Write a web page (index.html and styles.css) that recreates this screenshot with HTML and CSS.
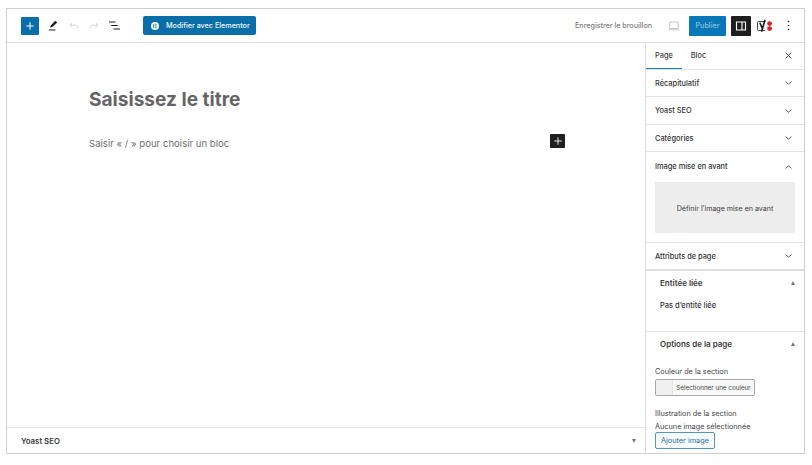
FILE: index.html
```html
<!DOCTYPE html>
<html lang="fr">
<head>
	<meta charset="UTF-8">
	<title>Modifier la page</title>
	<link rel="stylesheet" href="styles.css">
</head>
<body>
	<div class="frame">
		<div class="topbar">
			<div class="tools">
				<span class="add"><svg width="8" height="8" viewBox="0 0 8 8"><path d="M4 .3v7.4M.3 4h7.4" stroke="#fff" stroke-width="1" fill="none"/></svg></span>
				<svg class="ic-pen" width="10" height="11" viewBox="0 0 10 11"><path d="M7.2 .8 9.2 2.6 4.4 7 2.2 7.6 2.8 5.4Z" fill="#1e1e1e"/><path d="M.8 10h6.6" stroke="#1e1e1e" stroke-width="1"/></svg>
				<svg class="ic-undo" width="10" height="8" viewBox="0 0 10 8"><path d="M3.4 .8 1 3.2 3.4 5.6M1 3.2h5.4c1.4 0 2.4 1 2.4 2.4v1" stroke="#cdcdcd" stroke-width=".9" fill="none"/></svg>
				<svg class="ic-redo" width="10" height="8" viewBox="0 0 10 8"><path d="M6.6 .8 9 3.2 6.6 5.6M9 3.2H3.6C2.2 3.2 1.2 4.2 1.2 5.6v1" stroke="#cdcdcd" stroke-width=".9" fill="none"/></svg>
				<svg class="ic-list" width="11" height="9" viewBox="0 0 11 9"><path d="M0 1h6.5M2.2 4.5h6.5M4.5 8H11" stroke="#1e1e1e" stroke-width="1.1" fill="none"/></svg>
				<span class="elementor">
					<svg width="8" height="8" viewBox="0 0 8 8"><circle cx="4" cy="4" r="4" fill="#f4f7fa"/><path d="M2.6 2.2v3.6" stroke="#0a6ea8" stroke-width=".9"/><path d="M3.8 2.4h1.9M3.8 4h1.9M3.8 5.6h1.9" stroke="#0a6ea8" stroke-width=".7"/></svg>
					Modifier avec Elementor
				</span>
			</div>
			<div class="actions">
				<span class="draft">Enregistrer le brouillon</span>
				<svg class="ic-laptop" width="12" height="10" viewBox="0 0 12 10"><path d="M1.8 1h8.4v6.5H1.8ZM0.5 8.8h11" stroke="#bdbdbd" stroke-width="0.9" fill="none"/></svg>
				<span class="publish">Publier</span>
				<span class="toggle"><svg width="12" height="12" viewBox="0 0 12 12"><path d="M1.5 2h9v8h-9ZM7 2v8" stroke="#fff" stroke-width="1.1" fill="none"/></svg></span>
				<svg class="ic-yoast" width="16" height="14" viewBox="0 0 16 14"><path d="M8.5 2.5H1.5a1 1 0 0 0-1 1v7a1 1 0 0 0 1 1h6.5" fill="#f4f4f4" stroke="#444" stroke-width="1"/><path d="M2.8 3.8 5.3 9.4M8 .8 4.6 12.8" stroke="#111" stroke-width="1.5" fill="none"/><circle cx="12.6" cy="4.6" r="2.4" fill="#d8232f"/><circle cx="12.6" cy="9.6" r="2.4" fill="#d8232f"/></svg>
				<svg class="ic-more" width="3" height="11" viewBox="0 0 3 11"><circle cx="1.5" cy="1.5" r="0.8" fill="#1e1e1e"/><circle cx="1.5" cy="5.5" r="0.8" fill="#1e1e1e"/><circle cx="1.5" cy="9.5" r="0.8" fill="#1e1e1e"/></svg>
			</div>
		</div>

		<div class="workspace">
			<div class="editor">
				<div class="canvas">
					<h1 class="title">Saisissez le titre</h1>
					<div class="block-row">
						<p class="placeholder">Saisir « / » pour choisir un bloc</p>
						<span class="block-add"><svg width="8" height="8" viewBox="0 0 8 8"><path d="M4 .3v7.4M.3 4h7.4" stroke="#e8e8e8" stroke-width="1" fill="none"/></svg></span>
					</div>
				</div>
				<div class="metabar">
					<span>Yoast SEO</span>
					<span class="tri"></span>
				</div>
			</div>

			<div class="sidebar">
				<div class="tabs">
					<span class="tab on">Page</span>
					<span class="tab">Bloc</span>
					<svg class="ic-close" width="7" height="7" viewBox="0 0 7 7"><path d="M.8.8l5.4 5.4M6.2.8.8 6.2" stroke="#333" stroke-width=".9" fill="none"/></svg>
				</div>
				<div class="panel h27"><span>Récapitulatif</span><svg class="chev" width="7" height="4" viewBox="0 0 7 4"><path d="M.6.6 3.5 3.2 6.4.6" stroke="#444" stroke-width=".9" fill="none"/></svg></div>
				<div class="panel h28"><span>Yoast SEO</span><svg class="chev" width="7" height="4" viewBox="0 0 7 4"><path d="M.6.6 3.5 3.2 6.4.6" stroke="#444" stroke-width=".9" fill="none"/></svg></div>
				<div class="panel h27"><span>Catégories</span><svg class="chev" width="7" height="4" viewBox="0 0 7 4"><path d="M.6.6 3.5 3.2 6.4.6" stroke="#444" stroke-width=".9" fill="none"/></svg></div>
				<div class="section featured">
					<div class="panel-head"><span>Image mise en avant</span><svg class="chev" width="7" height="4" viewBox="0 0 7 4"><path d="M.6 3.4 3.5.8 6.4 3.4" stroke="#444" stroke-width=".9" fill="none"/></svg></div>
					<div class="image-box">Définir l’image mise en avant</div>
				</div>
				<div class="panel h28 thick"><span>Attributs de page</span><svg class="chev" width="7" height="4" viewBox="0 0 7 4"><path d="M.6.6 3.5 3.2 6.4.6" stroke="#444" stroke-width=".9" fill="none"/></svg></div>
				<div class="section meta linked">
					<div class="meta-head"><span>Entitée liée</span><span class="tri up"></span></div>
					<p class="meta-note">Pas d’entité liée</p>
				</div>
				<div class="section meta options">
					<div class="meta-head"><span>Options de la page</span><span class="tri up"></span></div>
					<div class="field-label">Couleur de la section</div>
					<div class="color-btn"><span class="swatch"></span><span class="color-text">Sélectionner une couleur</span></div>
					<div class="field-label second">Illustration de la section</div>
					<div class="field-label third">Aucune image sélectionnée</div>
					<span class="add-image">Ajouter image</span>
				</div>
			</div>
		</div>
	</div>
</body>
</html>
```

FILE: styles.css
```css
*{
	margin: 0;
	padding: 0;
	box-sizing: border-box;
}
html,body{
	height: 100%;
	overflow: hidden;
}
body{
	background: #fff;
	font-family: Inter, "Liberation Sans", sans-serif;
	color: #2a2a2a;
	padding: 8px 7px 11px 6px;
}
.frame{
	height: 446px;
	border: 1px solid #cfcfcf;
	display: flex;
	flex-direction: column;
	overflow: hidden;
}

/* barre du haut */
.topbar{
	height: 34px;
	flex: none;
	border-bottom: 1px solid #dedede;
	display: flex;
	justify-content: space-between;
	align-items: center;
	padding: 0 14px 0 14px;
}
.tools,.actions{
	display: flex;
	align-items: center;
}
.add{
	width: 18px;
	height: 18px;
	background: #0a6ea8;
	border-radius: 1px;
	display: flex;
	align-items: center;
	justify-content: center;
}
.ic-pen{
	margin-left: 9px;
}
.ic-undo{
	margin-left: 11px;
}
.ic-redo{
	margin-left: 10px;
}
.ic-list{
	margin-left: 10px;
}
.elementor{
	margin-left: 23px;
	width: 113px;
	height: 19px;
	background: #0a6ea8;
	border-radius: 2px;
	color: #f2f6f9;
	font-size: 7.2px;
	font-weight: 500;
	display: flex;
	align-items: center;
	padding-left: 8px;
	gap: 7px;
}
.draft{
	font-size: 7.15px;
	color: #7d7d7d;
	font-weight: 500;
}
.ic-laptop{
	margin-left: 16px;
}
.publish{
	margin-left: 9px;
	width: 37px;
	height: 20px;
	background: #0a78b8;
	color: #8fc0dc;
	font-size: 7.2px;
	font-weight: 500;
	border-radius: 1px;
	display: flex;
	align-items: center;
	justify-content: center;
}
.toggle{
	margin-left: 5px;
	width: 20px;
	height: 20px;
	background: #1e1e1e;
	border-radius: 1px;
	display: flex;
	align-items: center;
	justify-content: center;
}
.ic-yoast{
	margin-left: 6px;
}
.ic-more{
	margin-left: 14px;
}

/* zone principale */
.workspace{
	flex: 1;
	display: flex;
	min-height: 0;
}
.editor{
	flex: 1;
	display: flex;
	flex-direction: column;
	min-width: 0;
}
.canvas{
	flex: 1;
	padding: 44px 80px 0 82px;
}
.title{
	font-size: 19.1px;
	line-height: 24px;
	font-weight: 700;
	color: #656565;
}
.block-row{
	margin-top: 22px;
	display: flex;
	justify-content: space-between;
	align-items: center;
	height: 16px;
}
.placeholder{
	font-size: 9.6px;
	color: #6e6e6e;
	padding-top: 4px;
}
.block-add{
	width: 15px;
	height: 14px;
	background: #1e1e1e;
	border-radius: 1px;
	display: flex;
	align-items: center;
	justify-content: center;
}
.metabar{
	height: 26px;
	flex: none;
	border-top: 1px solid #e8e8e8;
	display: flex;
	justify-content: space-between;
	align-items: center;
	padding: 0 9px 0 14px;
	font-size: 7.8px;
	font-weight: 600;
	color: #3a3a3a;
}
.tri{
	width: 0;
	height: 0;
	border-left: 2.5px solid transparent;
	border-right: 2.5px solid transparent;
	border-top: 4px solid #777;
}
.tri.up{
	border-top: 0;
	border-bottom: 4px solid #777;
}

/* colonne de droite */
.sidebar{
	width: 159px;
	flex: none;
	border-left: 1px solid #dedede;
	font-size: 7.4px;
	font-weight: 500;
	color: #333;
}
.tabs{
	height: 27px;
	border-bottom: 1px solid #e4e4e4;
	display: flex;
	align-items: center;
	padding-right: 12px;
}
.tab{
	height: 26px;
	width: 36px;
	display: flex;
	align-items: center;
	justify-content: center;
	border-bottom: 1px solid transparent;
	color: #3a3a3a;
}
.tab.on{
	border-bottom: 1px solid #1f7cb3;
}
.tab + .tab{
	width: 33px;
}
.ic-close{
	margin-left: auto;
	margin-bottom: 2px;
}
.panel,.panel-head{
	display: flex;
	align-items: center;
	justify-content: space-between;
	padding: 0 12px 0 9px;
}
.panel{
	border-bottom: 1px solid #e4e4e4;
}
.h27{
	height: 27px;
}
.h28{
	height: 28px;
}
.thick{
	border-bottom: 2px solid #dedede;
}
.section{
	border-bottom: 1px solid #e4e4e4;
}
.featured{
	height: 91px;
}
.panel-head{
	height: 29px;
}
.image-box{
	margin: 1px 9px 0 9px;
	height: 51px;
	padding-top: 2px;
	background: #ededed;
	display: flex;
	align-items: center;
	justify-content: center;
	font-size: 7.1px;
	font-weight: 400;
	color: #3a3a3a;
}
.meta-head{
	display: flex;
	align-items: center;
	justify-content: space-between;
	padding: 0 9px 0 14px;
	height: 24px;
	font-size: 8px;
	font-weight: 600;
	color: #3a3a3a;
}
.linked{
	height: 61px;
}
.meta-note{
	padding: 6px 0 0 14px;
	font-size: 7.5px;
	font-weight: 500;
}
.options{
	border-bottom: 0;
}
.field-label{
	padding-left: 9px;
	font-size: 7.3px;
	font-weight: 400;
	line-height: 10px;
	color: #444;
}
.options .field-label:nth-child(2){
	margin-top: 11px;
}
.color-btn{
	margin: 2px 0 0 9px;
	width: 100px;
	height: 17px;
	border: 1px solid #a3a8ad;
	border-radius: 2px;
	display: flex;
	align-items: center;
	background: #f8f8f8;
}
.swatch{
	width: 17px;
	height: 15px;
	background: #f0f0f0;
	border-right: 1px solid #e4e4e4;
}
.color-text{
	flex: 1;
	text-align: center;
	font-size: 6.3px;
	font-weight: 400;
	color: #444;
}
.second{
	margin-top: 13px;
}
.third{
	margin-top: 3px;
}
.add-image{
	display: inline-block;
	margin: 0 0 0 9px;
	width: 60px;
	height: 17px;
	line-height: 15px;
	text-align: center;
	border: 1px solid #4d97c0;
	border-radius: 2px;
	font-size: 7.3px;
	font-weight: 400;
	color: #1a6f9f;
	background: #f8fbfc;
}
```
